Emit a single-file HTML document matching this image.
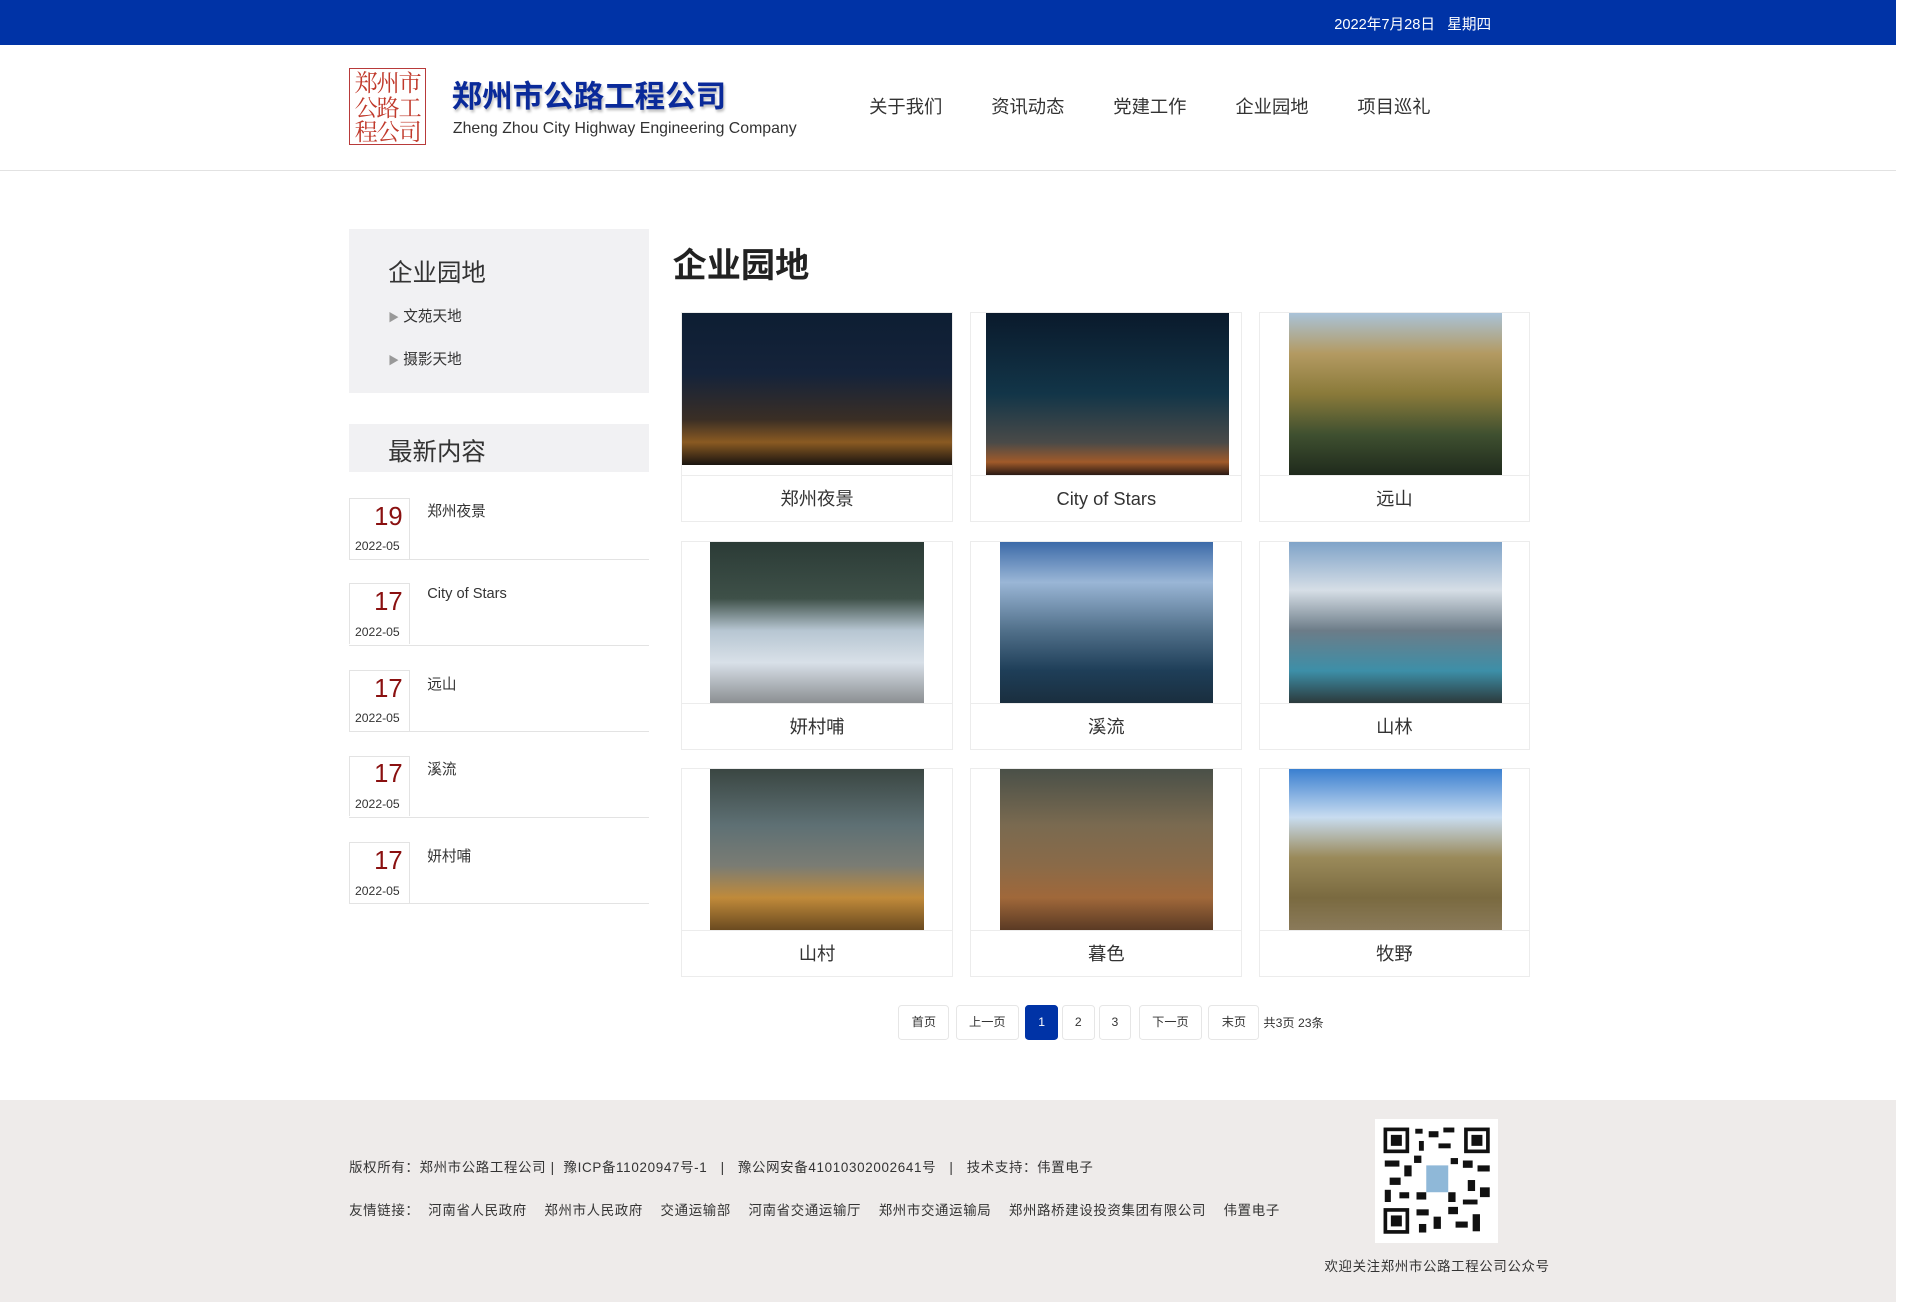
<!DOCTYPE html>
<html><head><meta charset="utf-8">
<style>
html,body{margin:0;padding:0;background:#fff;overflow:hidden}
body{width:1914px;height:1303px}
#w{zoom:1.2207;width:1568px;height:1067px;position:relative;font-family:"Liberation Sans","Noto Sans CJK SC",sans-serif;color:#333}
.a{position:absolute}
.top{left:0;top:0;width:1553px;height:37px;background:#0033a6;color:#fff;font-size:12px}
.hdr{left:0;top:139px;width:1553px;height:1px;background:#e2e2e2}
.nav span{position:absolute;top:76px;font-size:15px;color:#333}
.side1{left:286px;top:188px;width:246px;height:134px;background:#f1f1f3}
.side2{left:286px;top:347px;width:246px;height:40px;background:#f1f1f3}
.item{position:absolute;left:286px;width:246px;height:50px;border-bottom:1px solid #e3e3e3}
.item .d{position:absolute;left:0;top:0;width:48px;height:49px;border:1px solid #e3e3e3;border-bottom:none}
.item .n{position:absolute;right:5px;top:3px;font-size:21px;color:#8a1010}
.item .y{position:absolute;left:4px;top:33px;font-size:10px;color:#333}
.item .t{position:absolute;left:64px;top:2px;font-size:12px;color:#333}
.card{position:absolute;width:221px;height:170px;border:1px solid #ececec;background:#fff}
.card .im{position:absolute;top:0}
.card .cap{position:absolute;left:0;right:0;bottom:0;height:37px;border-top:1px solid #ececec;text-align:center;line-height:37px;font-size:15px;color:#333}
.pg{position:absolute;top:823px;height:27px;border:1px solid #e6e6e6;border-radius:3px;font-size:10px;line-height:27px;text-align:center;color:#333;background:#fff}
.foot{left:0;top:901px;width:1553px;height:166px;background:#eeebea}
.ft{font-size:11px;color:#333;white-space:nowrap;letter-spacing:0.55px}
</style></head><body><div id="w">
<div class="a top"><span class="a" style="left:1093px;top:11px">2022年7月28日&nbsp;&nbsp;&nbsp;星期四</span></div>
<div class="a" style="left:286px;top:56px;width:63px;height:63px;border:1px solid #b83a3a;box-sizing:border-box;color:#c0392b;font-size:19px;line-height:20px;text-align:center;font-family:'Noto Serif CJK SC',serif;letter-spacing:-1px;overflow:hidden">郑州市<br>公路工<br>程公司</div>
<div class="a" style="left:370px;top:59px;font-size:25px;font-weight:bold;color:#0a2a9a;text-shadow:1px 2px 2px rgba(0,0,0,.25)">郑州市公路工程公司</div>
<div class="a" style="left:371px;top:98px;font-size:13px;color:#333">Zheng Zhou City Highway Engineering Company</div>
<div class="nav"><span style="left:712px">关于我们</span><span style="left:812px">资讯动态</span><span style="left:912px">党建工作</span><span style="left:1012px">企业园地</span><span style="left:1112px">项目巡礼</span></div>
<div class="a hdr"></div>

<div class="a side1">
<div class="a" style="left:32px;top:20px;font-size:20px">企业园地</div>
<div class="a" style="left:32px;top:62px;font-size:12px"><span style="color:#999;font-size:9px">▶</span> 文苑天地</div>
<div class="a" style="left:32px;top:97px;font-size:12px"><span style="color:#999;font-size:9px">▶</span> 摄影天地</div>
</div>
<div class="a side2"><div class="a" style="left:32px;top:8px;font-size:20px">最新内容</div></div>
<div class="item" style="top:408px"><div class="d"><div class="n">19</div><div class="y">2022-05</div></div><div class="t">郑州夜景</div></div>
<div class="item" style="top:478px"><div class="d"><div class="n">17</div><div class="y">2022-05</div></div><div class="t">City of Stars</div></div>
<div class="item" style="top:549px"><div class="d"><div class="n">17</div><div class="y">2022-05</div></div><div class="t">远山</div></div>
<div class="item" style="top:619px"><div class="d"><div class="n">17</div><div class="y">2022-05</div></div><div class="t">溪流</div></div>
<div class="item" style="top:690px"><div class="d"><div class="n">17</div><div class="y">2022-05</div></div><div class="t">妍村哺</div></div>

<div class="a" style="left:551px;top:194px;font-size:28px;font-weight:bold;color:#222">企业园地</div>

<div class="card" style="left:558px;top:256px"><div class="im" style="left:0;width:221px;height:124px;background:linear-gradient(#0d1e33 0%,#15233a 40%,#3a2e25 70%,#8a5a22 85%,#1a1410 100%)"></div><div class="cap">郑州夜景</div></div>
<div class="card" style="left:795px;top:256px"><div class="im" style="left:12px;width:199px;height:132px;background:linear-gradient(#0a1a2c 0%,#123548 50%,#4a4a48 80%,#a05a2a 92%,#2a1a14 100%)"></div><div class="cap">City of Stars</div></div>
<div class="card" style="left:1031px;top:256px"><div class="im" style="left:24px;width:175px;height:132px;background:linear-gradient(#a9c3d8 0%,#b39a62 25%,#8a7a3a 50%,#3f5030 75%,#1f2a1c 100%)"></div><div class="cap">远山</div></div>

<div class="card" style="left:558px;top:443px"><div class="im" style="left:23px;width:175px;height:132px;background:linear-gradient(#2b3b36 0%,#3e5048 35%,#b7c6d2 55%,#d8e0e8 75%,#8b8f92 100%)"></div><div class="cap">妍村哺</div></div>
<div class="card" style="left:795px;top:443px"><div class="im" style="left:23px;width:175px;height:132px;background:linear-gradient(#3c6aa8 0%,#9ab6d6 25%,#51708a 55%,#1e3e58 80%,#1a2e3e 100%)"></div><div class="cap">溪流</div></div>
<div class="card" style="left:1031px;top:443px"><div class="im" style="left:24px;width:175px;height:132px;background:linear-gradient(#7fa3c8 0%,#d6dee6 30%,#6c7c88 55%,#3d8fa8 80%,#2c3a3c 100%)"></div><div class="cap">山林</div></div>

<div class="card" style="left:558px;top:629px"><div class="im" style="left:23px;width:175px;height:132px;background:linear-gradient(#3a4642 0%,#5e7074 35%,#7a7c74 60%,#c08a3a 80%,#6a4a20 100%)"></div><div class="cap">山村</div></div>
<div class="card" style="left:795px;top:629px"><div class="im" style="left:23px;width:175px;height:132px;background:linear-gradient(#4a5048 0%,#7a6a50 35%,#8a6a48 60%,#a0683a 80%,#5a3a24 100%)"></div><div class="cap">暮色</div></div>
<div class="card" style="left:1031px;top:629px"><div class="im" style="left:24px;width:175px;height:132px;background:linear-gradient(#3a7fd0 0%,#c8dcf0 30%,#9a8a5a 55%,#7a6a40 80%,#8a7a5a 100%)"></div><div class="cap">牧野</div></div>

<div class="pg" style="left:736px;width:40px">首页</div>
<div class="pg" style="left:783px;width:50px">上一页</div>
<div class="pg" style="left:840px;width:25px;background:#0033a6;border-color:#0033a6;color:#fff">1</div>
<div class="pg" style="left:870px;width:25px">2</div>
<div class="pg" style="left:900px;width:25px">3</div>
<div class="pg" style="left:933px;width:50px">下一页</div>
<div class="pg" style="left:990px;width:40px">末页</div>
<div class="a" style="left:1035px;top:830px;font-size:10px;color:#333">共3页 23条</div>

<div class="a foot">
<div class="a ft" style="left:286px;top:46px">版权所有：郑州市公路工程公司 |&nbsp;&nbsp;豫ICP备11020947号-1&nbsp;&nbsp;&nbsp;|&nbsp;&nbsp;&nbsp;豫公网安备41010302002641号&nbsp;&nbsp;&nbsp;|&nbsp;&nbsp;&nbsp;技术支持：伟置电子</div>
<div class="a ft" style="left:286px;top:81px">友情链接：&nbsp;&nbsp;河南省人民政府&nbsp;&nbsp;&nbsp;&nbsp;郑州市人民政府&nbsp;&nbsp;&nbsp;&nbsp;交通运输部&nbsp;&nbsp;&nbsp;&nbsp;河南省交通运输厅&nbsp;&nbsp;&nbsp;&nbsp;郑州市交通运输局&nbsp;&nbsp;&nbsp;&nbsp;郑州路桥建设投资集团有限公司&nbsp;&nbsp;&nbsp;&nbsp;伟置电子</div>
<div class="a" style="left:1126px;top:16px;width:101px;height:101px;background:#fff">
<svg width="101" height="101" viewBox="0 0 101 101" style="position:absolute;left:0;top:0">
<g fill="#111">
<rect x="7" y="7" width="21" height="21"/><rect x="10" y="10" width="15" height="15" fill="#fff"/><rect x="13" y="13" width="9" height="9"/>
<rect x="73" y="7" width="21" height="21"/><rect x="76" y="10" width="15" height="15" fill="#fff"/><rect x="79" y="13" width="9" height="9"/>
<rect x="7" y="73" width="21" height="21"/><rect x="10" y="76" width="15" height="15" fill="#fff"/><rect x="13" y="79" width="9" height="9"/>
<rect x="33" y="8" width="6" height="4"/><rect x="44" y="10" width="8" height="5"/><rect x="56" y="7" width="9" height="4"/><rect x="36" y="18" width="4" height="8"/><rect x="52" y="20" width="10" height="4"/>
<rect x="8" y="34" width="12" height="5"/><rect x="24" y="38" width="6" height="9"/><rect x="12" y="48" width="9" height="6"/><rect x="8" y="58" width="5" height="10"/><rect x="20" y="60" width="8" height="5"/>
<rect x="72" y="34" width="8" height="6"/><rect x="84" y="38" width="10" height="5"/><rect x="76" y="50" width="6" height="9"/><rect x="86" y="56" width="8" height="8"/><rect x="72" y="66" width="12" height="4"/>
<rect x="34" y="74" width="10" height="5"/><rect x="48" y="80" width="6" height="10"/><rect x="60" y="72" width="8" height="6"/><rect x="66" y="84" width="10" height="5"/><rect x="80" y="78" width="6" height="14"/><rect x="36" y="86" width="6" height="7"/>
<rect x="32" y="30" width="6" height="6"/><rect x="62" y="32" width="6" height="5"/><rect x="34" y="60" width="8" height="6"/><rect x="60" y="60" width="6" height="8"/>
</g>
<rect x="42" y="38" width="18" height="22" fill="#8fb8d8"/>
</svg></div>
<div class="a ft" style="left:1085px;top:127px">欢迎关注郑州市公路工程公司公众号</div>
</div>
</div></body></html>
